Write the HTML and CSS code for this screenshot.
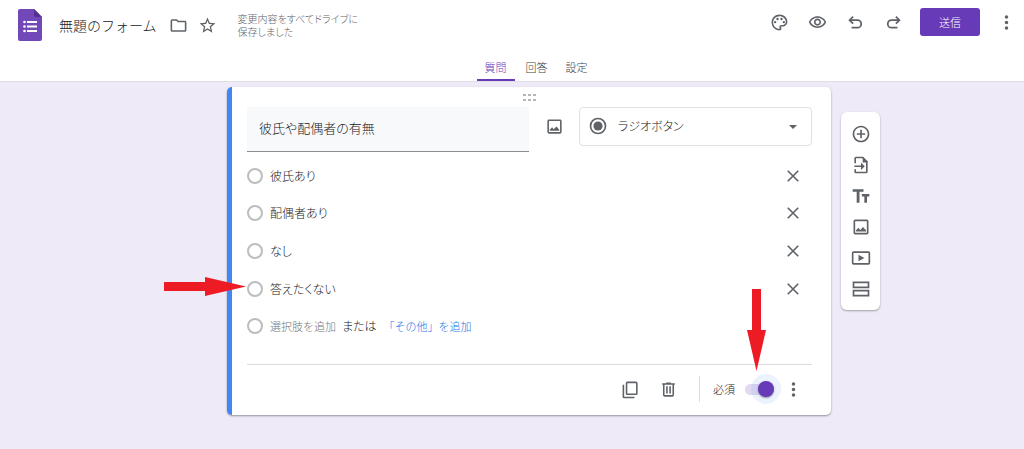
FILE: index.html
```html
<!DOCTYPE html>
<html lang="ja">
<head>
<meta charset="utf-8">
<meta name="viewport" content="width=device-width, initial-scale=1">
<title>無題のフォーム</title>
<link rel="stylesheet" href="styles.css">
</head>
<body>
<svg class="defs" width="0" height="0" aria-hidden="true">
  <symbol id="close" viewBox="0 0 24 24"><path d="M3 3l18 18M21 3L3 21" fill="none" stroke="currentColor" stroke-width="2.800"/></symbol>
  <symbol id="image" viewBox="0 0 24 24"><path d="M19 5v14H5V5h14m0-2H5c-1.100 0-2 .9-2 2v14c0 1.100.9 2 2 2h14c1.100 0 2-.9 2-2V5c0-1.100-.9-2-2-2z"/><path d="M6 17.500v-1.500l3-3 2 2.500 3.500-3.500 3.500 4v1.500z"/></symbol>
  <symbol id="more" viewBox="0 0 24 24"><circle cx="12" cy="5" r="2.200"/><circle cx="12" cy="12" r="2.200"/><circle cx="12" cy="19" r="2.200"/></symbol>
</svg>

<header class="header">
  <div class="topbar">
    <a class="logo" href="#" aria-label="フォーム ホーム">
      <svg viewBox="0 0 24 32"><path fill="#7248b9" d="M2 0h14l8 8v22a2 2 0 0 1-2 2H2a2 2 0 0 1-2-2V2a2 2 0 0 1 2-2z"/><path fill="#54308f" d="M16 0l8 8h-6a2 2 0 0 1-2-2z"/><g fill="#fff"><path d="M9 12h10v2H9zM9 16.500h10v2H9zM9 21h10v2H9z"/><circle cx="6.500" cy="13" r="1.300"/><circle cx="6.500" cy="17.500" r="1.300"/><circle cx="6.500" cy="22" r="1.300"/></g></svg>
    </a>
    <h1 class="title">無題のフォーム</h1>
    <button class="icon-button" aria-label="フォルダに移動"><svg viewBox="0 0 24 24"><path d="M9.200 6l2 2H20v10H4V6h5.200M10 4H4c-1.100 0-2 .9-2 2v12c0 1.100.9 2 2 2h16c1.100 0 2-.9 2-2V8c0-1.100-.9-2-2-2h-8l-2-2z"/></svg></button>
    <button class="icon-button star" aria-label="スター"><svg viewBox="0 0 24 24"><path d="M22 9.240l-7.190-.62L12 2 9.190 8.630 2 9.240l5.460 4.730L5.820 21 12 17.270 18.180 21l-1.630-7.030L22 9.240zM12 15.400l-3.760 2.270 1-4.280-3.320-2.880 4.380-.38L12 6.100l1.710 4.040 4.380.38-3.320 2.880 1 4.280L12 15.400z"/></svg></button>
    <p class="saved">変更内容をすべてドライブに<br>保存しました</p>
    <div class="actions">
      <button class="action" aria-label="テーマをカスタマイズ"><svg viewBox="0 0 24 24"><path d="M12 22C6.490 22 2 17.510 2 12S6.490 2 12 2s10 4.040 10 9c0 3.310-2.690 6-6 6h-1.770c-.28 0-.5.220-.5.500 0 .120.050.230.130.330.410.470.640 1.060.640 1.670A2.500 2.500 0 0 1 12 22zm0-18c-4.410 0-8 3.590-8 8s3.590 8 8 8c.28 0 .5-.22.5-.5a.54.54 0 0 0-.14-.35c-.41-.46-.63-1.050-.63-1.650a2.500 2.500 0 0 1 2.500-2.500H16c2.210 0 4-1.790 4-4 0-3.860-3.590-7-8-7z"/><circle cx="6.500" cy="11.500" r="1.500"/><circle cx="9.500" cy="7.500" r="1.500"/><circle cx="14.500" cy="7.500" r="1.500"/><circle cx="17.500" cy="11.500" r="1.500"/></svg></button>
      <button class="action" aria-label="プレビュー"><svg viewBox="0 0 24 24"><path d="M12 6c3.790 0 7.170 2.130 8.820 5.500C19.170 14.870 15.790 17 12 17s-7.170-2.130-8.820-5.500C4.830 8.130 8.210 6 12 6m0-2C7 4 2.730 7.110 1 11.500 2.730 15.890 7 19 12 19s9.270-3.110 11-7.500C21.270 7.110 17 4 12 4zm0 5a2.500 2.500 0 0 1 0 5 2.500 2.500 0 0 1 0-5m0-2c-2.480 0-4.500 2.020-4.500 4.500S9.520 16 12 16s4.500-2.020 4.500-4.500S14.480 7 12 7z"/></svg></button>
      <button class="action" aria-label="元に戻す"><svg viewBox="0 0 24 24"><path d="M9 4.500L4.500 9 9 13.500M5 9h9.500a4.750 4.750 0 0 1 0 9.500H7" fill="none" stroke="currentColor" stroke-width="2.200"/></svg></button>
      <button class="action" aria-label="やり直し"><svg viewBox="0 0 24 24"><path d="M15 4.500L19.500 9 15 13.500M19 9H9.500a4.750 4.750 0 0 0 0 9.500H17" fill="none" stroke="currentColor" stroke-width="2.200"/></svg></button>
      <button class="send">送信</button>
      <button class="icon-button" aria-label="その他"><svg><use href="#more"/></svg></button>
    </div>
  </div>
  <nav class="tabs">
    <a class="tab tab-active" href="#" aria-current="page">質問</a>
    <a class="tab" href="#">回答</a>
    <a class="tab" href="#">設定</a>
  </nav>
</header>

<main class="main">
  <section class="card">
    <div class="drag"><svg width="13" height="8" viewBox="0 0 13 8"><path d="M0 0h3v2H0zM5 0h3v2H5zM10 0h3v2h-3zM0 5h3v2H0zM5 5h3v2H5zM10 5h3v2h-3z"/></svg></div>
    <div class="question">
      <input class="question-text" type="text" value="彼氏や配偶者の有無" aria-label="質問">
      <button class="icon-button question-image" aria-label="画像を追加"><svg><use href="#image"/></svg></button>
      <div class="type">
        <svg class="type-icon" viewBox="0 0 24 24"><circle cx="12" cy="12" r="9" fill="none" stroke="currentColor" stroke-width="2"/><circle cx="12" cy="12" r="5.500"/></svg>
        <select class="type-select" aria-label="質問の形式"><option>ラジオボタン</option></select>
        <svg class="type-caret" viewBox="0 0 8 4"><path d="M0 0h8L4 4z"/></svg>
      </div>
    </div>
    <ul class="options">
      <li class="option"><input class="radio" type="radio" name="o" id="o1"><label for="o1">彼氏あり</label><button class="remove" aria-label="選択肢を削除"><svg><use href="#close"/></svg></button></li>
      <li class="option"><input class="radio" type="radio" name="o" id="o2"><label for="o2">配偶者あり</label><button class="remove" aria-label="選択肢を削除"><svg><use href="#close"/></svg></button></li>
      <li class="option"><input class="radio" type="radio" name="o" id="o3"><label for="o3">なし</label><button class="remove" aria-label="選択肢を削除"><svg><use href="#close"/></svg></button></li>
      <li class="option"><input class="radio" type="radio" name="o" id="o4"><label for="o4">答えたくない</label><button class="remove" aria-label="選択肢を削除"><svg><use href="#close"/></svg></button>
        <svg class="arrow arrow-right" viewBox="0 0 82 19"><path d="M0 5h41V0l41 9.500L41 19v-5H0z"/></svg></li>
      <li class="option"><input class="radio" type="radio" name="o" id="o5"><label class="hint" for="o5">選択肢を追加</label><span class="or">または</span><button class="add-other">「その他」を追加</button></li>
    </ul>
    <div class="footer">
      <button class="icon-button" aria-label="コピーを作成"><svg viewBox="0 0 24 24"><path d="M8 3h11a1 1 0 0 1 1 1v13a1 1 0 0 1-1 1H8a1 1 0 0 1-1-1V4a1 1 0 0 1 1-1zM3 6v15a1 1 0 0 0 1 1h13" fill="none" stroke="currentColor" stroke-width="2"/></svg></button>
      <button class="icon-button trash" aria-label="削除"><svg viewBox="0 0 24 24"><path d="M15 4V3H9v1H4v2h1v13c0 1.100.9 2 2 2h10c1.100 0 2-.9 2-2V6h1V4h-5zm2 15H7V6h10v13zM9 8h2v9H9zM13 8h2v9h-2z"/></svg></button>
      <div class="required">
        <label for="required">必須</label>
        <span class="switch-wrap"><input class="switch" type="checkbox" role="switch" id="required" checked>
          <svg class="arrow arrow-down" viewBox="0 0 19 82"><path d="M5 0h9v41h5L9.500 82 0 41h5z"/></svg></span>
      </div>
      <button class="icon-button" aria-label="その他のオプション"><svg><use href="#more"/></svg></button>
    </div>
  </section>

  <aside class="tools">
    <button class="tool" aria-label="質問を追加"><svg viewBox="0 0 24 24"><path d="M13 7h-2v4H7v2h4v4h2v-4h4v-2h-4V7zm-1-5C6.480 2 2 6.480 2 12s4.480 10 10 10 10-4.480 10-10S17.520 2 12 2zm0 18c-4.410 0-8-3.590-8-8s3.590-8 8-8 8 3.590 8 8-3.590 8-8 8z"/></svg></button>
    <button class="tool" aria-label="質問をインポート"><svg viewBox="0 0 24 24"><path d="M5 10V4a1 1 0 0 1 1-1h8l5 5v12a1 1 0 0 1-1 1H6a1 1 0 0 1-1-1v-3" fill="none" stroke="currentColor" stroke-width="2"/><path d="M14 2l6 6v1h-6zM12 9l4.500 4.500L12 18v-3.500H4v-2h8z"/></svg></button>
    <button class="tool" aria-label="タイトルと説明を追加"><svg viewBox="0 0 24 24"><path d="M2 4v3h4.800v13h3.400V7H15V4H2zm20 5.500h-9v3h3V20h3.200v-7.500H22v-3z"/></svg></button>
    <button class="tool" aria-label="画像を追加"><svg><use href="#image"/></svg></button>
    <button class="tool" aria-label="動画を追加"><svg viewBox="0 0 24 24"><path d="M3 5h18a1 1 0 0 1 1 1v12a1 1 0 0 1-1 1H3a1 1 0 0 1-1-1V6a1 1 0 0 1 1-1z" fill="none" stroke="currentColor" stroke-width="2"/><path d="M9 8l7 4-7 4z"/></svg></button>
    <button class="tool" aria-label="セクションを追加"><svg viewBox="0 0 24 24"><path d="M3 4h18v6H3zM3 14h18v6H3z" fill="none" stroke="currentColor" stroke-width="2"/></svg></button>
  </aside>
</main>
</body>
</html>
```

FILE: styles.css
```css
* { box-sizing: border-box; }

body {
  margin: 0;
  min-height: 100vh;
  background: #eeeaf7;
  color: #3c4043;
  font-family: "Noto Sans CJK JP", sans-serif;
  font-size: 12px;
  font-weight: 300;
  line-height: 16px;
  font-feature-settings: "palt";
}

button, input, select { font: inherit; font-feature-settings: inherit; color: inherit; }
button { padding: 0; border: 0; background: none; cursor: pointer; }
svg { display: block; fill: currentColor; }
.defs { position: absolute; }

.header { background: #fff; border-bottom: 1px solid #dfdfe3; }

.topbar {
  display: flex;
  align-items: center;
  height: 50px;
  padding: 0 8px 0 18px;
}
.logo { width: 24px; margin-right: 17px; }
.title {
  margin: 0 12px 0 0;
  font-size: 14px;
  font-weight: inherit;
  font-feature-settings: normal;
  line-height: 20px;
  color: #202124;
}
.icon-button {
  display: grid;
  place-items: center;
  flex: none;
  width: 20px;
  height: 20px;
  color: #5f6368;
}
.icon-button svg { width: 19px; height: 19px; }
.icon-button.star { margin-left: 9px; }
.saved { margin: 0 0 0 20px; font-size: 10px; line-height: 13px; color: #5f6368; }
.actions { display: flex; align-items: center; margin: 0 0 6px auto; }
.action { display: grid; place-items: center; width: 38px; height: 28px; color: #5f6368; }
.action svg { width: 19px; height: 19px; }
.send {
  width: 60px;
  height: 28px;
  margin: 0 16px 0 8px;
  border-radius: 3px;
  background: #673ab7;
  color: #fff;
  font-size: 11px;
}

.tabs { display: flex; justify-content: center; gap: 4px; padding-left: 47px; }
.tab {
  padding: 9px 8px 4px;
  border-bottom: 2px solid transparent;
  font-size: 11px;
  color: #3c4043;
  text-decoration: none;
}
.tab + .tab { padding: 9px 7px 4px; }
.tab-active { border-radius: 2px 2px 0 0; border-color: #673ab7; color: #673ab7; }

.main {
  display: grid;
  grid-template-columns: 227fr 604fr 193fr;
  align-items: start;
  padding: 5px 0 32px;
}

.card {
  grid-column: 2;
  padding: 0 19px 0 15px;
  border-left: 5px solid #4285f4;
  border-radius: 5px;
  background: #fff;
  box-shadow: 0 1px 2px rgba(60, 64, 67, .5);
}
.drag { display: flex; justify-content: center; height: 20px; padding-top: 7px; color: #b4b6b9; }

.question {
  display: grid;
  grid-template-columns: 282fr 50px 233fr;
  align-items: start;
}
.question-text {
  width: 100%;
  min-width: 0;
  height: 45px;
  padding: 0 12px 4px;
  border: 0;
  border-bottom: 1px solid #8a8d91;
  background: #f8f9fb;
  font-size: 13px;
  color: #202124;
}
.question-image { margin: 9px 15px 0; }
.type { position: relative; min-width: 0; color: #5f6368; }
.type-select {
  width: 100%;
  height: 39px;
  padding: 0 38px 2px;
  border: 1px solid #dfe1e4;
  border-radius: 4px;
  background: #fff;
  color: #202124;
  appearance: none;
}
.type-icon { position: absolute; top: 9px; left: 9px; width: 20px; height: 20px; pointer-events: none; }
.type-caret { position: absolute; top: 18px; right: 15px; width: 8px; height: 4px; pointer-events: none; }

.options {
  display: grid;
  grid-auto-rows: 1fr;
  min-height: 188px;
  margin: 5px 0 19px;
  padding: 0;
  list-style: none;
  color: #202124;
}
.option { position: relative; display: flex; align-items: center; }
.radio {
  flex: none;
  width: 16px;
  height: 16px;
  margin: 0 7px 0 0;
  border: 2px solid #bdbdbd;
  border-radius: 50%;
  appearance: none;
}
.remove { display: grid; place-items: center; width: 20px; height: 20px; margin: 0 9px 0 auto; color: #5f6368; }
.remove svg { width: 14px; height: 14px; }
.hint, .add-other { font-size: 11px; font-feature-settings: normal; }
.hint { color: #70757a; }
.or { margin: 0 7px 0 6px; }
.add-other { color: #1a73e8; }

.footer {
  display: flex;
  align-items: center;
  justify-content: flex-end;
  height: 51px;
  padding: 0 9px 2px 0;
  border-top: 1px solid #dadce0;
}
.footer .trash { margin: 0 21px 0 18px; }
.required {
  display: flex;
  align-items: center;
  gap: 10px;
  height: 26px;
  margin-right: 9px;
  padding-left: 13px;
  border-left: 1px solid #dadce0;
  font-size: 11px;
  color: #202124;
}
.switch-wrap { position: relative; display: flex; }
.switch {
  position: relative;
  width: 29px;
  height: 11px;
  margin: 0;
  border-radius: 6px;
  background: #e1d8f1;
  appearance: none;
}
.switch::after {
  content: "";
  position: absolute;
  top: -3px;
  right: 0;
  width: 16px;
  height: 16px;
  border-radius: 50%;
  background: #673ab7;
  box-shadow: 0 1px 2px rgba(0, 0, 0, .4), 0 0 0 7px rgba(66, 133, 244, .1);
}

.arrow { position: absolute; color: #ed1c24; pointer-events: none; }
.arrow-right { top: 7px; right: calc(100% + 1px); width: 82px; height: 19px; }
.arrow-down { right: 8px; bottom: 24px; width: 19px; height: 82px; }

.tools {
  display: grid;
  width: 39px;
  margin: 25px 0 0 10px;
  padding: 6px 0;
  border-radius: 6px;
  background: #fff;
  box-shadow: 0 1px 2px rgba(60, 64, 67, .45);
  color: #5f6368;
}
.tool { display: grid; place-items: center; min-height: 31px; }
.tool svg { width: 20px; height: 20px; }
```
